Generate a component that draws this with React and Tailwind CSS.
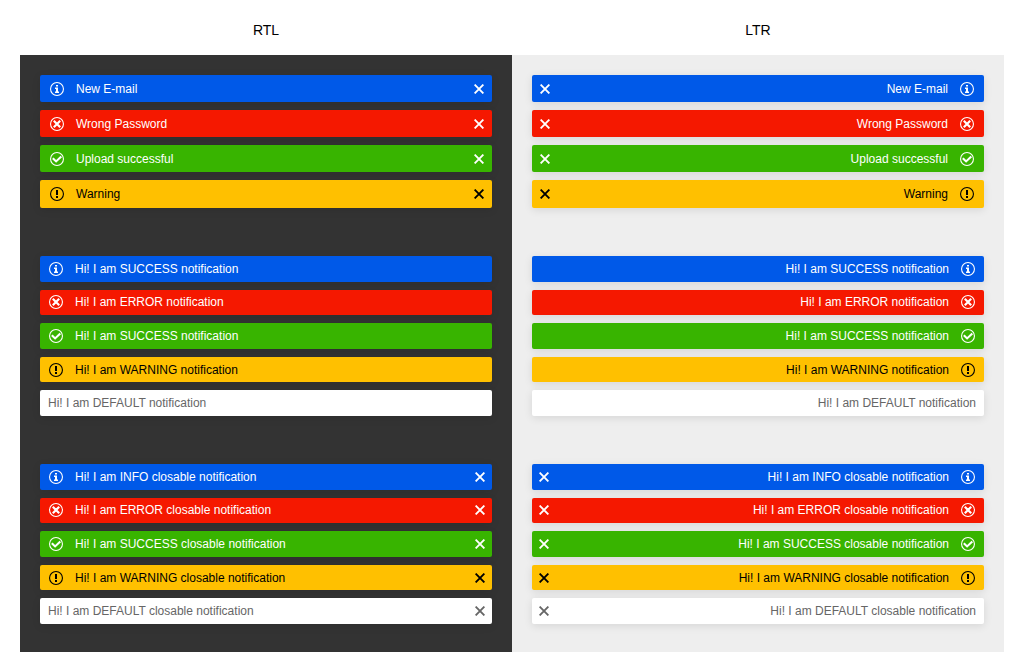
import React from "react";

const TONES = {
  info: "bg-[#0059e8] text-white",
  error: "bg-[#f51800] text-white",
  success: "bg-[#38b400] text-white",
  warning: "bg-[#ffc000] text-black",
  plain: "bg-white text-[#666666]",
};

const GLYPHS = {
  info: (
    <path
      d="M6 3h2v1.6H6zM5 5.6h3v4h1V11H5V9.6h1V7H5z"
      fill="currentColor"
    />
  ),
  error: (
    <path d="M3.8 3.8l6.4 6.4M10.2 3.8l-6.4 6.4" fill="none" stroke="currentColor" strokeWidth="2.2" />
  ),
  success: (
    <path d="M2.8 6.2l3.3 3.2 5.2-5" fill="none" stroke="currentColor" strokeWidth="2.1" />
  ),
  warning: <path d="M6 3h2v5H6zM6 9h2v2H6z" fill="currentColor" />,
};

function StatusIcon({ tone }) {
  return (
    <svg viewBox="0 0 14 14" className="size-3.5 shrink-0" aria-hidden="true">
      <circle cx="7" cy="7" r="6.45" fill="none" stroke="currentColor" strokeWidth="1.1" />
      {GLYPHS[tone]}
    </svg>
  );
}

function CloseButton() {
  return (
    <button type="button" aria-label="Close" className="shrink-0 cursor-pointer">
      <svg viewBox="0 0 10 10" className="size-2.5" aria-hidden="true">
        <path d="M0.6 0.6l8.8 8.8M9.4 0.6l-8.8 8.8" fill="none" stroke="currentColor" strokeWidth="1.9" />
      </svg>
    </button>
  );
}

function Notification({ tone, text, closable, roomy }) {
  const padding = roomy ? "ps-2.5 pe-2" : tone === "plain" ? "ps-2 pe-[7px]" : "ps-[9px] pe-[7px]";
  return (
    <li
      className={`flex items-center gap-3 rounded-xs text-xs shadow-[0_2px_8px_rgba(0,0,0,0.1)] ${padding} ${TONES[tone]}`}
    >
      {tone !== "plain" && <StatusIcon tone={tone} />}
      <span className="min-w-0 flex-1">{text}</span>
      {closable && <CloseButton />}
    </li>
  );
}

const ALERTS = [
  { tone: "info", text: "New E-mail" },
  { tone: "error", text: "Wrong Password" },
  { tone: "success", text: "Upload successful" },
  { tone: "warning", text: "Warning" },
];

const BASIC = [
  { tone: "info", text: "Hi! I am SUCCESS notification" },
  { tone: "error", text: "Hi! I am ERROR notification" },
  { tone: "success", text: "Hi! I am SUCCESS notification" },
  { tone: "warning", text: "Hi! I am WARNING notification" },
  { tone: "plain", text: "Hi! I am DEFAULT notification" },
];

const CLOSABLE = [
  { tone: "info", text: "Hi! I am INFO closable notification" },
  { tone: "error", text: "Hi! I am ERROR closable notification" },
  { tone: "success", text: "Hi! I am SUCCESS closable notification" },
  { tone: "warning", text: "Hi! I am WARNING closable notification" },
  { tone: "plain", text: "Hi! I am DEFAULT closable notification" },
];

function Column({ title, dir, surface }) {
  return (
    <section className="flex-1">
      <h2 className="pt-5 pb-[15px] text-center text-sm text-black">{title}</h2>
      <div dir={dir} className={`flex flex-col gap-12 px-5 pt-5 pb-7 ${surface}`}>
        <ul className="grid grid-rows-[27px_27px_27px_28px] gap-2">
          {ALERTS.map((n, i) => (
            <Notification key={i} {...n} closable roomy />
          ))}
        </ul>
        <ul className="grid h-40 grid-rows-5 gap-2">
          {BASIC.map((n, i) => (
            <Notification key={i} {...n} />
          ))}
        </ul>
        <ul className="grid h-40 grid-rows-5 gap-2">
          {CLOSABLE.map((n, i) => (
            <Notification key={i} {...n} closable />
          ))}
        </ul>
      </div>
    </section>
  );
}

export default function App() {
  return (
    <main className="flex bg-white px-5 pb-5 font-['Liberation_Sans',Arial,sans-serif]">
      <Column title="RTL" dir="ltr" surface="bg-[#333333]" />
      <Column title="LTR" dir="rtl" surface="bg-[#eeeeee]" />
    </main>
  );
}
